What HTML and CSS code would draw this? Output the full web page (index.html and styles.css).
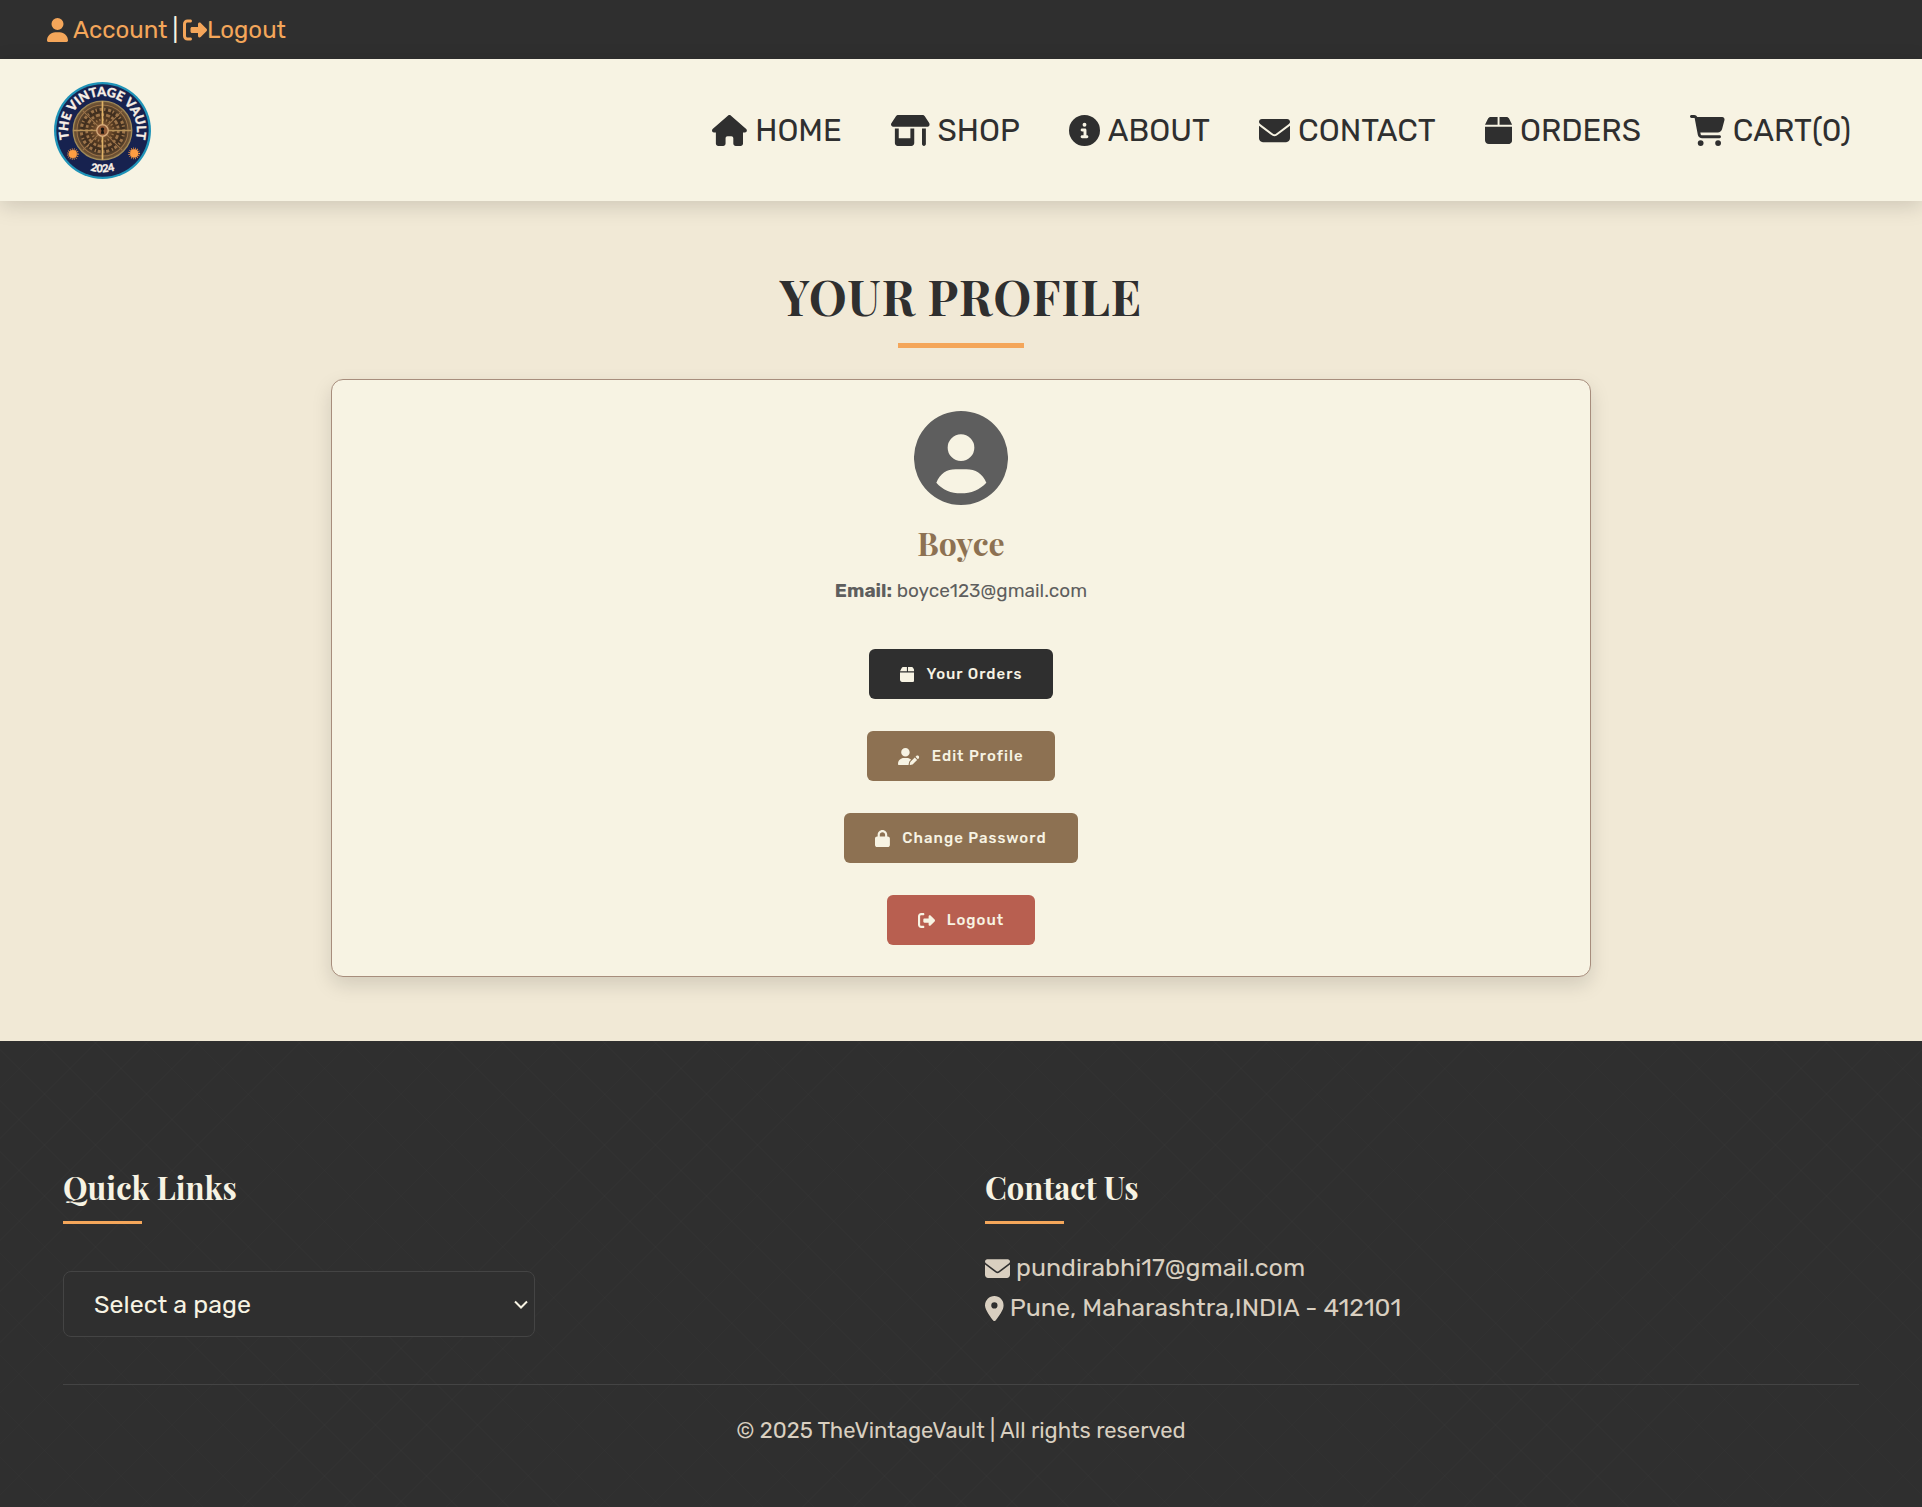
FILE: index.html
```html
<!DOCTYPE html>
<html lang="en">
<head>
<meta charset="utf-8">
<meta name="viewport" content="width=device-width, initial-scale=1">
<title>The Vintage Vault - Your Profile</title>
<link rel="stylesheet" href="styles.css">
</head>
<body>
<svg class="sprite" aria-hidden="true">
  <symbol id="i-user" viewBox="0 0 448 512"><path d="M224 256A128 128 0 1 0 224 0a128 128 0 1 0 0 256zm-45.7 48C79.8 304 0 383.8 0 482.3C0 498.7 13.3 512 29.7 512H418.3c16.4 0 29.7-13.3 29.7-29.7C448 383.8 368.2 304 269.7 304H178.3z"/></symbol>
  <symbol id="i-exit" viewBox="0 0 512 512"><path d="M377.9 105.9L500.7 228.7c7.2 7.2 11.3 17.1 11.3 27.3s-4.1 20.1-11.3 27.3L377.9 406.1c-6.4 6.4-15 9.9-24 9.9c-18.7 0-33.9-15.2-33.9-33.9l0-62.1-128 0c-17.7 0-32-14.3-32-32l0-64c0-17.7 14.3-32 32-32l128 0 0-62.1c0-18.7 15.2-33.9 33.9-33.9c9 0 17.6 3.6 24 9.9zM160 96L96 96c-17.7 0-32 14.3-32 32l0 256c0 17.7 14.3 32 32 32l64 0c17.7 0 32 14.3 32 32s-14.3 32-32 32l-64 0c-53 0-96-43-96-96L0 128C0 75 43 32 96 32l64 0c17.7 0 32 14.3 32 32s-14.3 32-32 32z"/></symbol>
  <symbol id="i-home" viewBox="0 0 576 512"><path d="M575.8 255.5c0 18-15 32.1-32 32.1h-32l.7 160.2c0 2.7-.2 5.4-.5 8.1V472c0 22.1-17.9 40-40 40H456c-1.1 0-2.2 0-3.3-.1c-1.4 .1-2.8 .1-4.2 .1H416 392c-22.1 0-40-17.9-40-40V448 384c0-17.7-14.3-32-32-32H256c-17.7 0-32 14.3-32 32v64 24c0 22.1-17.9 40-40 40H160 128.1c-1.5 0-3-.1-4.5-.2c-1.2 .1-2.4 .2-3.6 .2H104c-22.1 0-40-17.9-40-40V360c0-.9 0-1.9 .1-2.8V287.6H32c-18 0-32-14-32-32.1c0-9 3-17 10-24L266.4 8c7-7 15-8 22-8s15 2 21 7L564.8 231.5c8 7 12 15 11 24z"/></symbol>
  <symbol id="i-shop" viewBox="0 0 640 512"><path d="M36.8 192H603.2c20.3 0 36.8-16.5 36.8-36.8c0-7.3-2.2-14.4-6.2-20.4L558.2 21.4C549.3 8 534.4 0 518.3 0H121.7c-16 0-31 8-39.9 21.4L6.2 134.7c-4 6.1-6.2 13.2-6.2 20.4C0 175.5 16.5 192 36.8 192zM64 224V384v80c0 26.5 21.5 48 48 48H336c26.5 0 48-21.5 48-48V384 224H320V384H128V224H64zm448 0v256c0 17.7 14.3 32 32 32s32-14.3 32-32V224H512z"/></symbol>
  <symbol id="i-info" viewBox="0 0 512 512"><path d="M256 512A256 256 0 1 0 256 0a256 256 0 1 0 0 512zM216 336h24V272H216c-13.3 0-24-10.7-24-24s10.7-24 24-24h48c13.3 0 24 10.7 24 24v88h8c13.3 0 24 10.7 24 24s-10.7 24-24 24H216c-13.3 0-24-10.7-24-24s10.7-24 24-24zm40-208a32 32 0 1 1 0 64 32 32 0 1 1 0-64z"/></symbol>
  <symbol id="i-mail" viewBox="0 0 512 512"><path d="M48 64C21.5 64 0 85.5 0 112c0 15.1 7.1 29.3 19.2 38.4L236.8 313.6c11.4 8.5 27 8.5 38.4 0L492.8 150.4c12.1-9.1 19.2-23.3 19.2-38.4c0-26.5-21.5-48-48-48H48zM0 176V384c0 35.3 28.7 64 64 64H448c35.3 0 64-28.7 64-64V176L294.4 339.2c-22.8 17.1-54 17.1-76.8 0L0 176z"/></symbol>
  <symbol id="i-box" viewBox="0 0 448 512"><path d="M50.7 58.5L0 160H208V32H93.7C75.5 32 58.9 42.3 50.7 58.5zM240 160H448L397.3 58.5C389.1 42.3 372.5 32 354.3 32H240V160zm208 32H0V416c0 35.3 28.7 64 64 64H384c35.3 0 64-28.7 64-64V192z"/></symbol>
  <symbol id="i-cart" viewBox="0 0 576 512"><path d="M0 24C0 10.7 10.7 0 24 0H69.5c22 0 41.5 12.8 50.6 32h411c26.3 0 45.5 25 38.6 50.4l-41 152.3c-8.5 31.4-37 53.3-69.5 53.3H170.7l5.4 28.5c2.2 11.3 12.1 19.5 23.6 19.5H488c13.3 0 24 10.7 24 24s-10.7 24-24 24H199.7c-34.6 0-64.3-24.6-70.7-58.5L77.4 54.5c-.7-3.8-4-6.5-7.9-6.5H24C10.7 48 0 37.3 0 24zM128 464a48 48 0 1 1 96 0 48 48 0 1 1 -96 0zm336-48a48 48 0 1 1 0 96 48 48 0 1 1 0-96z"/></symbol>
  <symbol id="i-lock" viewBox="0 0 448 512"><path d="M144 144v48H304V144c0-44.2-35.8-80-80-80s-80 35.8-80 80zM80 192V144C80 64.5 144.5 0 224 0s144 64.5 144 144v48h16c35.3 0 64 28.7 64 64V448c0 35.3-28.7 64-64 64H64c-35.3 0-64-28.7-64-64V256c0-35.3 28.7-64 64-64H80z"/></symbol>
  <symbol id="i-edit" viewBox="0 0 640 512"><path d="M224 256A128 128 0 1 0 224 0a128 128 0 1 0 0 256zm-45.7 48C79.8 304 0 383.8 0 482.3C0 498.7 13.3 512 29.7 512H322.8c-3.1-8.8-3.7-18.4-1.4-27.8l15-60.1c2.8-11.3 8.6-21.5 16.8-29.7l40.3-40.3c-32.1-31-75.7-50.1-123.9-50.1H178.3zm435.5-68.3c-15.6-15.6-40.9-15.6-56.6 0l-29.4 29.4 71 71 29.4-29.4c15.6-15.6 15.6-40.9 0-56.6l-14.4-14.4zM375.9 417c-4.1 4.1-7 9.2-8.4 14.9l-15 60.1c-1.4 5.5 .2 11.2 4.2 15.2s9.7 5.6 15.2 4.2l60.1-15c5.6-1.4 10.8-4.3 14.9-8.4L576.1 358.7l-71-71L375.9 417z"/></symbol>
  <symbol id="i-pin" viewBox="0 0 384 512"><path d="M215.7 499.2C267 435 384 279.4 384 192C384 86 298 0 192 0S0 86 0 192c0 87.4 117 243 168.3 307.2c12.3 15.3 35.1 15.3 47.4 0zM192 128a64 64 0 1 1 0 128 64 64 0 1 1 0-128z"/></symbol>
</svg>

<div class="topbar">
  <a class="account" href="#"><svg class="icon w448"><use href="#i-user"/></svg>Account</a>
  <span>|</span>
  <a href="#"><svg class="icon w512"><use href="#i-exit"/></svg>Logout</a>
</div>

<header class="header">
  <a class="brand" href="#" aria-label="The Vintage Vault home">
    <svg class="logo" viewBox="0 0 288 288">
      <defs>
        <path id="arc-name" d="M144 246A102 102 0 1 1 144.1 246"/>
        <path id="arc-year" d="M20 144A124 124 0 0 0 268 144"/>
        <radialGradient id="brass"><stop offset="0" stop-color="#b07a4a"/><stop offset=".35" stop-color="#5a3d22"/><stop offset=".7" stop-color="#3c2c1e"/><stop offset="1" stop-color="#7a5c3a"/></radialGradient>
      </defs>
      <circle cx="144" cy="144" r="144" fill="#1f93b8"/>
      <circle cx="144" cy="144" r="137" fill="#17224f"/>
      <circle cx="144" cy="144" r="87" fill="url(#brass)" stroke="#a08a58" stroke-width="4"/>
      <g fill="none" stroke="#9c744a">
        <circle cx="144" cy="144" r="76" stroke-width="3"/>
        <circle cx="144" cy="144" r="63" stroke-width="9" stroke-dasharray="9 5 4 8"/>
        <circle cx="144" cy="144" r="47" stroke-width="8" stroke-dasharray="8 6 12 5"/>
        <circle cx="144" cy="144" r="32" stroke-width="7" stroke-dasharray="4 6"/>
        <path d="M144 57V231" stroke="#e0b468" stroke-width="5"/>
        <path d="M57 144H231" stroke="#b89258" stroke-width="4"/>
        <path d="M85 85L203 203M203 85L85 203" stroke-width="3"/>
      </g>
      <circle cx="144" cy="144" r="17" fill="#8f5935" stroke="#d8ab7c" stroke-width="4"/>
      <path d="M144 135a5 5 0 0 1 3 9l2 10h-10l2-10a5 5 0 0 1 3-9z" fill="#1b1410"/>
      <g fill="#ff9d42" stroke="#ff9d42">
        <circle cx="56" cy="214" r="12"/><circle cx="56" cy="214" r="15" fill="none" stroke-width="5" stroke-dasharray="2 4"/>
        <circle cx="238" cy="212" r="12"/><circle cx="238" cy="212" r="15" fill="none" stroke-width="5" stroke-dasharray="2 4"/>
      </g>
      <text class="logo-name"><textPath href="#arc-name" startOffset="50%">THE VINTAGE VAULT</textPath></text>
      <text class="logo-year"><textPath href="#arc-year" startOffset="50%">2024</textPath></text>
    </svg>
  </a>
  <nav class="nav">
    <a href="#"><svg class="icon w576"><use href="#i-home"/></svg>HOME</a>
    <a href="#"><svg class="icon w640"><use href="#i-shop"/></svg>SHOP</a>
    <a href="#"><svg class="icon w512"><use href="#i-info"/></svg>ABOUT</a>
    <a href="#"><svg class="icon w512"><use href="#i-mail"/></svg>CONTACT</a>
    <a href="#"><svg class="icon w448"><use href="#i-box"/></svg>ORDERS</a>
    <a href="#"><svg class="icon w576"><use href="#i-cart"/></svg>CART(0)</a>
  </nav>
</header>

<main class="profile">
  <h1 class="title">YOUR PROFILE</h1>
  <section class="card">
    <svg class="avatar" viewBox="0 0 282 282"><path fill-rule="evenodd" d="M141 0a141 141 0 1 1 0 282a141 141 0 1 1 0-282zM141 70a40 40 0 1 0 0 80a40 40 0 1 0 0-80zM67 215C85 236 111 247 141 247S198 236 217 215C206 188 184 175 157 175H125C98 175 78 188 67 215z"/></svg>
    <h2 class="name">Boyce</h2>
    <p class="email"><strong>Email:</strong> boyce123@gmail.com</p>
    <div class="actions">
      <button class="btn dark" type="button"><svg class="icon w448"><use href="#i-box"/></svg>Your Orders</button>
      <button class="btn" type="button"><svg class="icon w640"><use href="#i-edit"/></svg>Edit Profile</button>
      <button class="btn" type="button"><svg class="icon w448"><use href="#i-lock"/></svg>Change Password</button>
      <button class="btn danger" type="button"><svg class="icon w512"><use href="#i-exit"/></svg>Logout</button>
    </div>
  </section>
</main>

<footer class="footer">
  <div class="columns">
    <section>
      <h3 class="heading">Quick Links</h3>
      <div class="picker">
        <select class="pages" aria-label="Select a page">
          <option>Select a page</option>
          <option>Home</option>
          <option>Shop</option>
          <option>About</option>
          <option>Contact</option>
        </select>
        <svg class="chevron" viewBox="0 0 14 9" aria-hidden="true"><path d="M1 1.500L7 7.500L13 1.500"/></svg>
      </div>
    </section>
    <section>
      <h3 class="heading">Contact Us</h3>
      <p class="contact"><svg class="icon w512"><use href="#i-mail"/></svg>pundirabhi17@gmail.com</p>
      <p class="contact"><svg class="icon w384"><use href="#i-pin"/></svg>Pune, Maharashtra,INDIA - 412101</p>
    </section>
  </div>
  <p class="copyright">© 2025 TheVintageVault | All rights reserved</p>
</footer>
</body>
</html>
```
FILE: styles.css
```css
* { box-sizing: border-box; }

body {
  margin: 0;
  min-height: 100vh;
  display: flex;
  flex-direction: column;
  background: #f1e9d6;
  color: #2f2f2f;
  font-family: Rubik, Roboto, "Liberation Sans", sans-serif;
}

a { color: inherit; text-decoration: none; }
h1, h2, h3, p { margin: 0; }
h1, h2, h3 { font-family: "Playfair Display", "Liberation Serif", serif; font-weight: 700; }

.sprite { display: none; }
.icon { height: 1em; fill: currentColor; flex: none; }
.w384 { width: 0.75em; }
.w448 { width: 0.875em; }
.w512 { width: 1em; }
.w576 { width: 1.125em; }
.w640 { width: 1.25em; }

.topbar {
  display: flex;
  align-items: center;
  gap: 5px;
  height: 59px;
  padding: 0 47px;
  background: #2f2f2f;
  color: #f7f3e3;
  font-size: 24px;
}
.topbar a { display: flex; align-items: center; color: #f4a65a; }
.topbar .account { gap: 5px; }

.header {
  display: flex;
  align-items: center;
  justify-content: space-between;
  height: 142px;
  padding: 0 71px 0 54px;
  background: #f7f3e3;
  box-shadow: 0 5px 20px rgba(0, 0, 0, 0.15);
}
.brand, .logo { display: block; }
.logo { width: 97px; height: 97px; }
.logo-name, .logo-year {
  font-family: Lato, sans-serif;
  font-weight: 900;
  fill: #f8efe6;
  stroke: #f8efe6;
  text-anchor: middle;
}
.logo-name { font-size: 38px; stroke-width: 1px; }
.logo-year { font-size: 32px; stroke-width: 1px; }

.nav { display: flex; gap: 49px; font-size: 31px; }
.nav a { display: flex; align-items: center; gap: 8px; }

.profile {
  display: flex;
  flex-direction: column;
  align-items: center;
  padding: 64px;
}
.title {
  display: flex;
  flex-direction: column;
  align-items: center;
  gap: 16px;
  margin-bottom: 31px;
  font-size: 48px;
  line-height: 62px;
  letter-spacing: 1px;
}
.title::after { content: ""; width: 126px; height: 5px; background: #f4a65a; }

.card {
  display: flex;
  flex-direction: column;
  align-items: center;
  width: 100%;
  max-width: 1260px;
  padding: 31px;
  background: #f7f3e3;
  border: 1px solid #a78d7c;
  border-radius: 12px;
  box-shadow: 0 8px 20px rgba(0, 0, 0, 0.13);
}
.avatar { width: 94px; height: 94px; fill: #5e5e5e; }
.name { margin-top: 17px; color: #8d7152; font-size: 32px; line-height: 42px; }
.email { margin-top: 12px; color: #5e5e5e; font-size: 19px; line-height: 30px; }
.actions { display: flex; flex-direction: column; align-items: center; gap: 32px; margin-top: 43px; }
.btn {
  display: flex;
  align-items: center;
  gap: 12px;
  height: 50px;
  padding: 0 31px;
  border: 0;
  border-radius: 6px;
  background: #8d7152;
  color: #f7f3e3;
  font: 500 15px Rubik, Roboto, "Liberation Sans", sans-serif;
  letter-spacing: 1px;
}
.btn .icon { font-size: 17px; }
.btn.dark { background: #2f2f2f; }
.btn.danger { background: #b85f50; }

.footer {
  flex: 1;
  padding: 126px 63px 48px;
  color: #d9cfc0;
  background:
    repeating-linear-gradient(45deg, transparent 0 35px, rgba(255, 255, 255, 0.01) 35px 36px),
    repeating-linear-gradient(-45deg, transparent 0 35px, rgba(255, 255, 255, 0.01) 35px 36px),
    #2f2f2f;
}
.columns {
  display: grid;
  grid-template-columns: 1fr 1fr;
  gap: 48px;
  padding-bottom: 47px;
  border-bottom: 1px solid #444;
}
.heading { color: #f7f3e3; font-size: 31px; line-height: 40px; }
.heading::after { content: ""; display: block; width: 79px; height: 3px; margin: 14px 0 24px; background: #f4a65a; }
.picker {
  display: grid;
  align-items: center;
  width: 472px;
  max-width: 100%;
  margin-top: 47px;
}
.pages, .chevron { grid-area: 1 / 1; }
.pages {
  appearance: none;
  width: 100%;
  height: 66px;
  padding: 0 30px;
  border: 1px solid #444;
  border-radius: 8px;
  background: #2f2f2f;
  color: #f7f3e3;
  font: 25px Rubik, Roboto, "Liberation Sans", sans-serif;
}
.chevron {
  justify-self: end;
  width: 14px;
  height: 9px;
  margin-right: 7px;
  fill: none;
  stroke: #f7f3e3;
  stroke-width: 2px;
  pointer-events: none;
}
.contact { display: flex; align-items: center; gap: 6px; font-size: 25px; line-height: 40px; }
.copyright { padding-top: 31px; text-align: center; font-size: 22px; line-height: 30px; }
```
